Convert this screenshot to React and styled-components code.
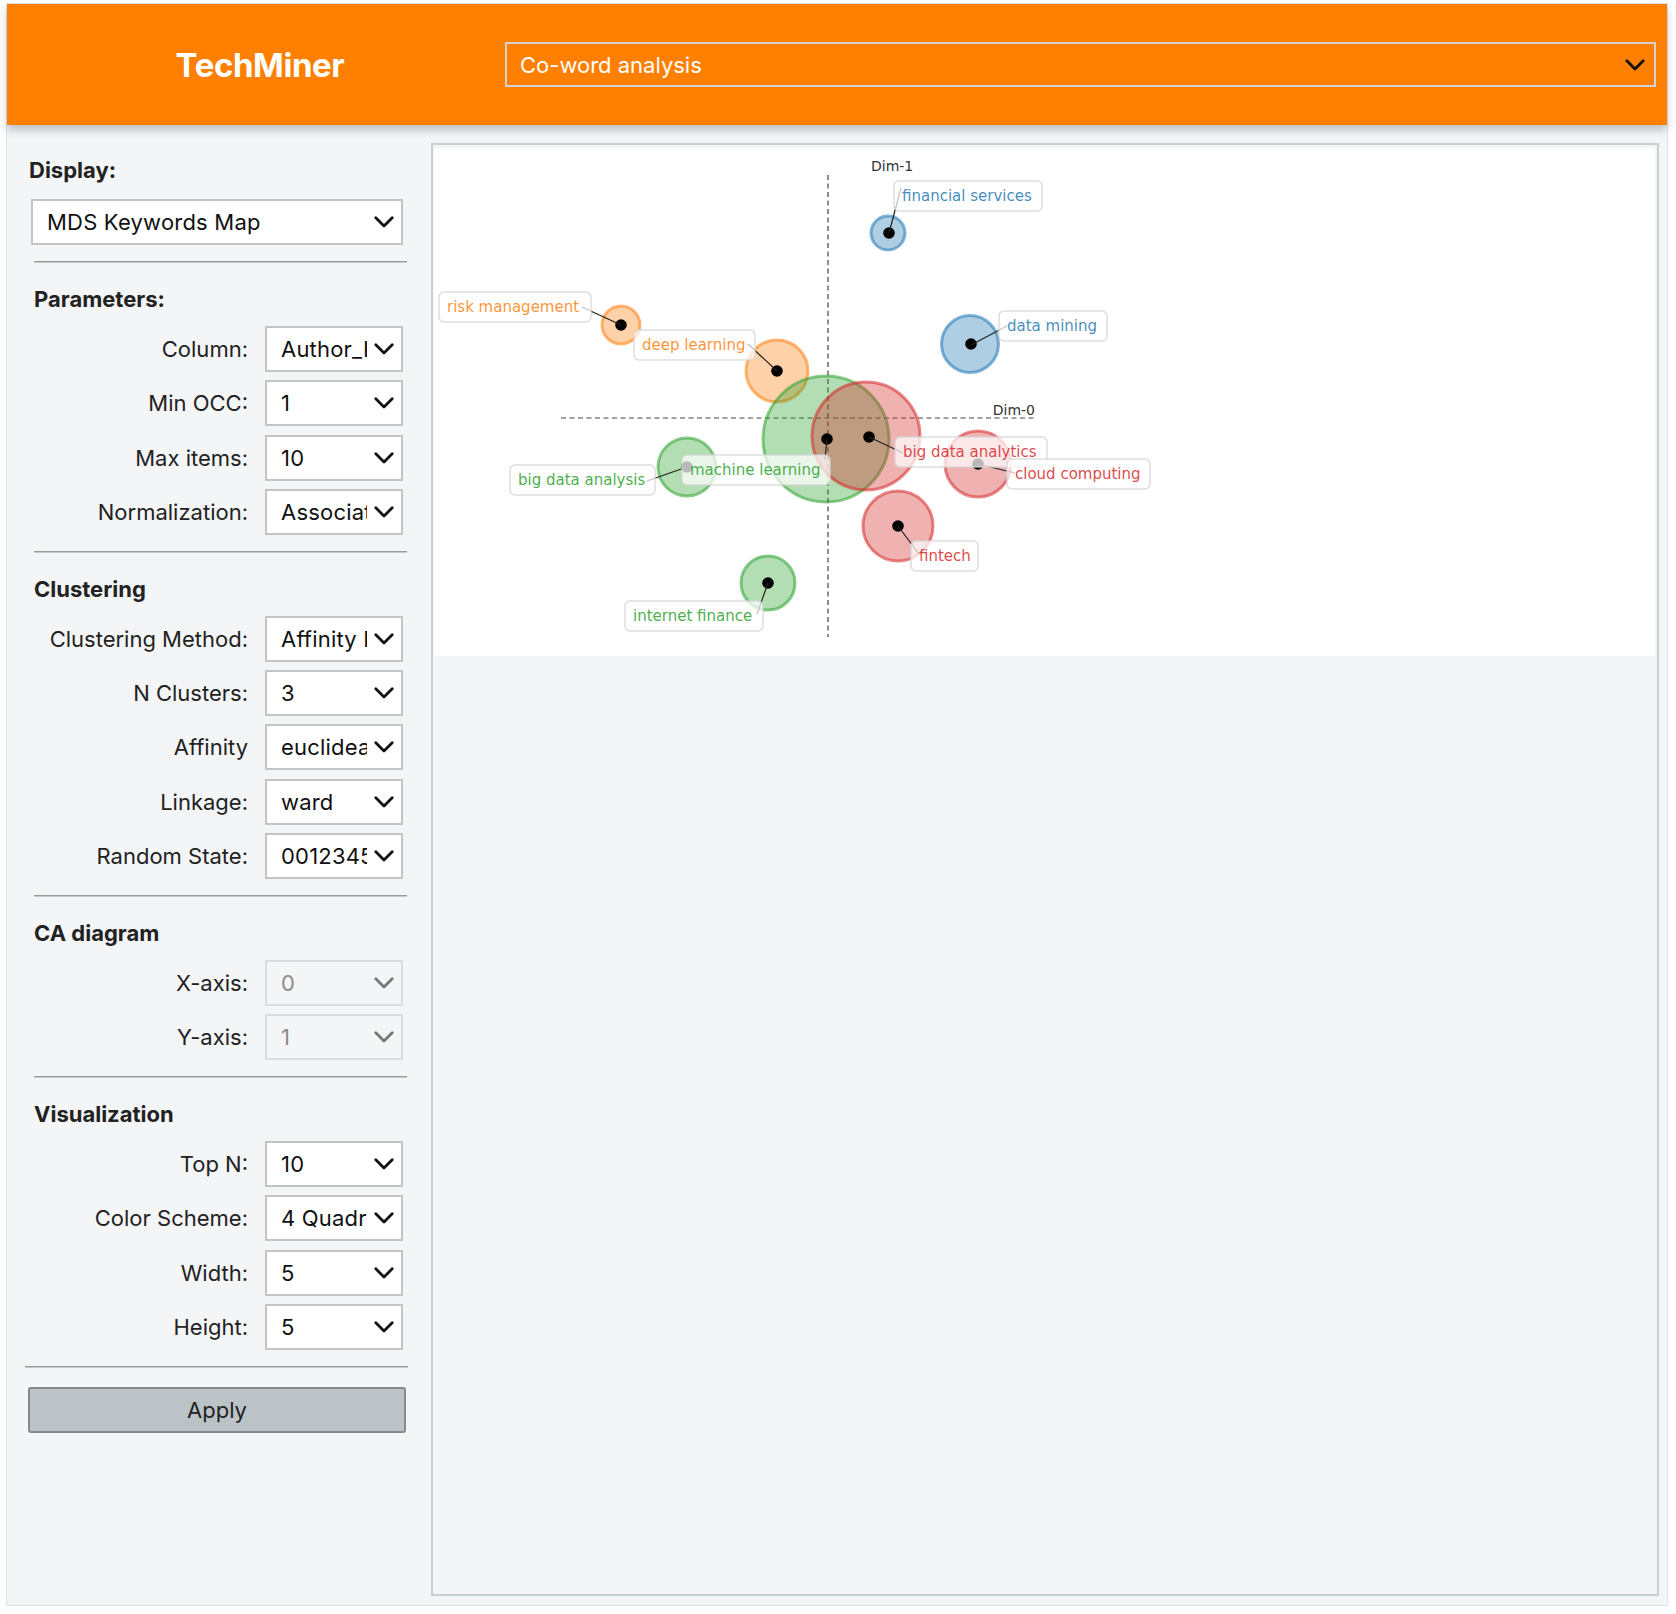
import React from 'react';
import styled, { createGlobalStyle } from 'styled-components';

const GlobalStyle = createGlobalStyle`
  * { box-sizing: border-box; }
  body {
    margin: 0;
    background: #fff;
    font-family: Inter, "Open Sans", "Liberation Sans", sans-serif;
    color: #222;
  }
`;

const Frame = styled.div`
  margin: 3px 8px 8px 6px;
  height: 1603px;
  border: 1px solid #dde4ea;
  background: #f4f5f7;
  display: flex;
  flex-direction: column;
`;

const Header = styled.header`
  flex: none;
  height: 121px;
  background: #ff8000;
  display: flex;
  align-items: center;
  box-shadow: 0 5px 8px rgba(60, 70, 80, 0.3);
  position: relative;
  z-index: 1;
`;

const Brand = styled.div`
  width: 498px;
  padding-left: 8px;
  text-align: center;
  color: #fff;
  font-size: 33px;
  font-weight: 700;
  letter-spacing: -0.4px;
`;

const TopSelect = styled.div`
  flex: 1;
  margin-right: 11px;
  height: 45px;
  border: 2px solid #d2d2d2;
  display: flex;
  align-items: center;
  justify-content: space-between;
  padding: 0 9px 0 13px;
  color: #fff;
  font-size: 22px;
`;

const Body = styled.div`
  flex: 1;
  display: flex;
  min-height: 0;
`;

const Sidebar = styled.aside`
  flex: none;
  width: 424px;
  padding: 30px 0 0 22px;
`;

const Heading = styled.div`
  margin: ${p => (p.$first ? '0' : '21px')} 0 0 ${p => (p.$first ? '0' : '5px')};
  height: 30px;
  line-height: 30px;
  font-size: 22px;
  font-weight: 700;
  color: #222;
`;

const Divider = styled.hr`
  margin: 16px 0 0 ${p => (p.$wide ? '-4px' : '5px')};
  width: ${p => (p.$wide ? '383px' : '373px')};
  height: 0;
  border: none;
  border-top: 1px solid #9a9a9a;
  border-bottom: 1px solid #c9c9c9;
`;

const Fields = styled.div`
  margin-top: 12px;
  display: grid;
  grid-template-columns: 219px 138px;
  column-gap: 17px;
  row-gap: 8.25px;
  align-items: center;
`;

const Label = styled.label`
  text-align: right;
  font-size: 22px;
  color: #222;
  white-space: nowrap;
`;

const SelectWrap = styled.div`
  position: relative;
  width: ${p => p.$width || '100%'};
  margin-left: ${p => p.$offset || '0'};
  margin-top: ${p => p.$top || '0'};
`;

const Select = styled.select`
  appearance: none;
  -webkit-appearance: none;
  width: 100%;
  height: 46px;
  border: 2px solid #c4c4c4;
  border-radius: 0;
  background: #fff;
  padding: 0 34px 0 14px;
  font-family: inherit;
  font-size: 22px;
  letter-spacing: 0.2px;
  color: #111;
  outline: none;

  &:disabled {
    background: #f4f5f7;
    border-color: #dcdcdc;
    color: #8c8c8c;
    opacity: 1;
  }
`;

const Chevron = styled.svg`
  position: absolute;
  right: 9px;
  top: 50%;
  margin-top: -6px;
  pointer-events: none;
`;

const ApplyButton = styled.button`
  margin: 19px 0 0 -1px;
  width: 378px;
  height: 46px;
  background: #bcc3c6;
  border: 2px solid #868a8c;
  border-radius: 3px;
  font-family: inherit;
  font-size: 22px;
  color: #222;
`;

const Output = styled.main`
  flex: 1;
  margin: 18px 8px 9px 0;
  border: 2px solid #c9d0d0;
  padding: 3px 2px 0 1px;
`;

const Plot = styled.div`
  height: 508px;
  background: #fff;
`;

const ChevronIcon = ({ color = '#111' }) => (
  <Chevron width="20" height="12" viewBox="0 0 20 12">
    <polyline points="1.8,1.8 10,10 18.2,1.8" fill="none" stroke={color} strokeWidth="2.8" strokeLinecap="round" strokeLinejoin="round" />
  </Chevron>
);

const Dropdown = ({ value, disabled, ...rest }) => (
  <SelectWrap {...rest}>
    <Select value={value} disabled={disabled} onChange={() => {}}>
      <option value={value}>{value}</option>
    </Select>
    <ChevronIcon color={disabled ? '#777' : '#111'} />
  </SelectWrap>
);

const sections = [
  {
    title: 'Parameters:',
    fields: [
      ['Column:', 'Author_Keywords'],
      ['Min OCC:', '1'],
      ['Max items:', '10'],
      ['Normalization:', 'Association'],
    ],
  },
  {
    title: 'Clustering',
    fields: [
      ['Clustering Method:', 'Affinity Propagation'],
      ['N Clusters:', '3'],
      ['Affinity', 'euclidean'],
      ['Linkage:', 'ward'],
      ['Random State:', '0012345'],
    ],
  },
  {
    title: 'CA diagram',
    fields: [
      ['X-axis:', '0', true],
      ['Y-axis:', '1', true],
    ],
  },
  {
    title: 'Visualization',
    fields: [
      ['Top N:', '10'],
      ['Color Scheme:', '4 Quadrants'],
      ['Width:', '5'],
      ['Height:', '5'],
    ],
  },
];

const COLORS = {
  blue: '#1f77b4',
  orange: '#ff7f0e',
  green: '#2ca02c',
  red: '#d62728',
};

// bubbles: centre, radius, colour
const bubbles = [
  { cx: 454, cy: 85, r: 17, c: 'blue' },
  { cx: 536, cy: 196, r: 28.5, c: 'blue' },
  { cx: 187, cy: 177, r: 19, c: 'orange' },
  { cx: 343, cy: 223, r: 31, c: 'orange' },
  { cx: 392, cy: 291, r: 63, c: 'green' },
  { cx: 253, cy: 319, r: 29, c: 'green' },
  { cx: 334, cy: 435, r: 27, c: 'green' },
  { cx: 432, cy: 288, r: 54, c: 'red' },
  { cx: 544, cy: 316, r: 33, c: 'red' },
  { cx: 464, cy: 378, r: 35, c: 'red' },
];

// labels: box, text start, leader line from dot to text
const labels = [
  { text: 'financial services', c: 'blue', x: 460, y: 33, w: 148, dot: [455, 85], end: [467, 40] },
  { text: 'data mining', c: 'blue', x: 565, y: 163, w: 108, dot: [537, 197], end: [573, 178] },
  { text: 'risk management', c: 'orange', x: 5, y: 144, w: 152, dot: [187, 177], end: [148, 159] },
  { text: 'deep learning', c: 'orange', x: 200, y: 182, w: 121, dot: [343, 223], end: [314, 196] },
  { text: 'big data analytics', c: 'red', x: 461, y: 289, w: 152, dot: [435, 289], end: [469, 305] },
  { text: 'cloud computing', c: 'red', x: 573, y: 311, w: 143, dot: [544, 316], end: [581, 325] },
  { text: 'fintech', c: 'red', x: 477, y: 393, w: 67, dot: [464, 378], end: [485, 406] },
  { text: 'big data analysis', c: 'green', x: 76, y: 317, w: 145, dot: [253, 319], end: [213, 333] },
  { text: 'machine learning', c: 'green', x: 248, y: 307, w: 148, dot: [393, 291], end: [391, 311] },
  { text: 'internet finance', c: 'green', x: 191, y: 453, w: 138, dot: [334, 435], end: [323, 466] },
];

const dots = [
  [455, 85], [537, 196], [187, 177], [343, 223], [393, 291],
  [253, 319], [334, 435], [435, 289], [544, 316], [464, 378],
];

const MapChart = () => (
  <svg width="1221" height="508" viewBox="0 0 1221 508" style={{ display: 'block' }}>
    <g fontFamily="'DejaVu Sans', sans-serif">
      <line x1="394" y1="27" x2="394" y2="489" stroke="#444" strokeWidth="1.2" strokeDasharray="5 3.5" />
      <line x1="127" y1="270" x2="601" y2="270" stroke="#444" strokeWidth="1.2" strokeDasharray="5 3.5" />
      <text x="437" y="23" fontSize="14" fill="#333">Dim-1</text>
      <text x="601" y="267" fontSize="14" fill="#333" textAnchor="end">Dim-0</text>

      {bubbles.map((b, i) => (
        <circle
          key={i}
          cx={b.cx}
          cy={b.cy}
          r={b.r}
          fill={COLORS[b.c]}
          fillOpacity="0.36"
          stroke={COLORS[b.c]}
          strokeOpacity="0.55"
          strokeWidth="3"
        />
      ))}

      {dots.map(([x, y], i) => (
        <circle key={i} cx={x} cy={y} r="5.8" fill="#000" />
      ))}

      {labels.map((l, i) => (
        <line key={i} x1={l.dot[0]} y1={l.dot[1]} x2={l.end[0]} y2={l.end[1]} stroke="#222" strokeWidth="1.2" />
      ))}

      {labels.map((l, i) => (
        <g key={i}>
          <rect
            x={l.x}
            y={l.y}
            width={l.w}
            height="30"
            rx="5"
            fill="#fff"
            fillOpacity="0.72"
            stroke="#d4d4d4"
            strokeOpacity="0.8"
            strokeWidth="1.5"
          />
          <text x={l.x + 8} y={l.y + 20} fontSize="15" fill={COLORS[l.c]} fillOpacity="0.85">
            {l.text}
          </text>
        </g>
      ))}
    </g>
  </svg>
);

export default function App() {
  return (
    <>
      <GlobalStyle />
      <Frame>
        <Header>
          <Brand>TechMiner</Brand>
          <TopSelect>
            <span>Co-word analysis</span>
            <svg width="20" height="12" viewBox="0 0 20 12">
              <polyline points="1.8,1.8 10,10 18.2,1.8" fill="none" stroke="#111" strokeWidth="2.8" strokeLinecap="round" strokeLinejoin="round" />
            </svg>
          </TopSelect>
        </Header>

        <Body>
          <Sidebar>
            <Heading $first>Display:</Heading>
            <Dropdown value="MDS Keywords Map" $width="372px" $offset="2px" $top="14px" />

            {sections.map(section => (
              <React.Fragment key={section.title}>
                <Divider />
                <Heading>{section.title}</Heading>
                <Fields>
                  {section.fields.map(([label, value, disabled]) => (
                    <React.Fragment key={label}>
                      <Label>{label}</Label>
                      <Dropdown value={value} disabled={disabled} />
                    </React.Fragment>
                  ))}
                </Fields>
              </React.Fragment>
            ))}

            <Divider $wide />
            <ApplyButton>Apply</ApplyButton>
          </Sidebar>

          <Output>
            <Plot>
              <MapChart />
            </Plot>
          </Output>
        </Body>
      </Frame>
    </>
  );
}
